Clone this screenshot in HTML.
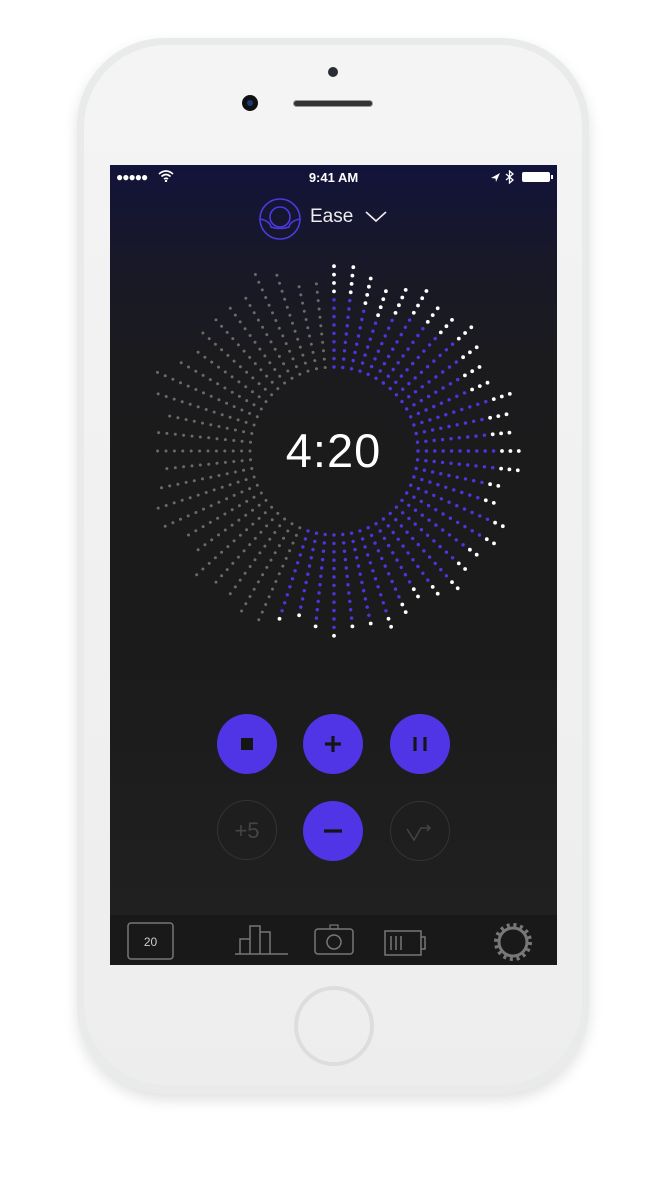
<!DOCTYPE html>
<html><head><meta charset="utf-8"><style>
html,body{margin:0;padding:0;background:#fff;width:666px;height:1200px;overflow:hidden;font-family:"Liberation Sans",sans-serif}
.phone{position:absolute;left:77px;top:38px;width:512px;height:1056px;border-radius:88px;background:#e9eaea;box-shadow:0 6px 14px rgba(0,0,0,.12)}
.face{position:absolute;left:7px;top:7px;width:498px;height:1040px;border-radius:82px;background:linear-gradient(#f4f4f4,#ededed)}
.screen{position:absolute;left:110px;top:165px;width:447px;height:800px;background:linear-gradient(#12133a 0px,#181829 90px,#1b1b1d 200px,#1b1b1b 500px,#202020 750px);overflow:hidden}
.tab{position:absolute;left:0;top:750px;width:447px;height:50px;background:#191919}
</style></head><body>
<div class="phone"><div class="face"></div></div>
<div style="position:absolute;left:328px;top:67px;width:10px;height:10px;border-radius:50%;background:#2a2d33"></div>
<div style="position:absolute;left:293px;top:100px;width:80px;height:7px;border-radius:4px;background:#333;border:1px solid #999;box-sizing:border-box"></div>
<div style="position:absolute;left:242px;top:95px;width:16px;height:16px;border-radius:50%;background:#111"><div style="margin:5px;width:6px;height:6px;border-radius:50%;background:#1c3a7a"></div></div>
<div style="position:absolute;left:294px;top:986px;width:72px;height:72px;border-radius:50%;border:4px solid #dddddd"></div>

<div class="screen">
 <div style="position:absolute;left:6px;top:5px;color:#fff;font-size:12px;letter-spacing:-1px">●●●●●</div>
 <svg style="position:absolute;left:48px;top:5px" width="16" height="12" viewBox="0 0 16 12"><path d="M1 4Q8-2 15 4M3.5 6.5Q8 2.5 12.5 6.5M6 9Q8 7.5 10 9" stroke="#fff" stroke-width="1.6" fill="none"/><circle cx="8" cy="11" r="1.2" fill="#fff"/></svg>
 <div style="position:absolute;left:0;width:447px;top:5px;text-align:center;color:#fff;font-size:13px;font-weight:bold">9:41 AM</div>
 <svg style="position:absolute;left:378px;top:5px" width="66" height="14"><path d="M3 8L12 3L8 12L7.5 8.5Z" fill="#fff"/><path d="M18 4L25 10L21.5 13V1L25 4L18 10" stroke="#fff" stroke-width="1.3" fill="none"/><rect x="34" y="2" width="28" height="10" rx="2" fill="#fff"/><rect x="63" y="5" width="2" height="4" fill="#fff"/></svg>
 <svg style="position:absolute;left:148px;top:32px" width="44" height="44" viewBox="0 0 44 44"><circle cx="22" cy="22" r="20" stroke="#4a3ae0" stroke-width="1.6" fill="none"/><circle cx="22" cy="20" r="10" stroke="#4a3ae0" stroke-width="1.6" fill="none"/><path d="M2 22Q12 24 13 30Q22 33 31 30Q32 24 42 22" stroke="#4a3ae0" stroke-width="1.6" fill="none"/></svg>
 <div style="position:absolute;left:200px;top:41px;color:#eee;font-size:19px">Ease</div>
 <svg style="position:absolute;left:255px;top:46px" width="22" height="12"><path d="M1 1L11 10L21 1" stroke="#eee" stroke-width="1.6" fill="none"/></svg>
 <svg id="dial" style="position:absolute;left:0;top:0" width="447" height="750"></svg>
 <div style="position:absolute;left:0;width:447px;top:258px;text-align:center;color:#fff;font-size:47px;font-weight:300;letter-spacing:1px">4:20</div>

 <svg style="position:absolute;left:0;top:540px" width="447" height="210">
  <circle cx="137" cy="39" r="30" fill="#4f35e6"/><rect x="131" y="33" width="12" height="12" fill="#151515"/>
  <circle cx="223" cy="39" r="30" fill="#4f35e6"/><path d="M223 31v16M215 39h16" stroke="#151515" stroke-width="3.2"/>
  <circle cx="310" cy="39" r="30" fill="#4f35e6"/><path d="M305 32v14M315 32v14" stroke="#151515" stroke-width="3.2"/>
  <circle cx="137" cy="125" r="29.5" fill="none" stroke="#333" stroke-width="1"/><text x="137" y="133" fill="#444" font-size="22" text-anchor="middle" font-family="Liberation Sans">+5</text>
  <circle cx="223" cy="126" r="30" fill="#4f35e6"/><path d="M214 126h18" stroke="#151515" stroke-width="3.2"/>
  <circle cx="310" cy="126" r="29.5" fill="none" stroke="#333" stroke-width="1"/><path d="M297 124L304 135L311 123H320M317 120L320 123L317 126" stroke="#444" stroke-width="1.5" fill="none"/>
 </svg>
 <div class="tab">
  <svg width="447" height="50">
   <rect x="18" y="8" width="45" height="36" rx="3" fill="none" stroke="#777" stroke-width="1.5"/><text x="40.5" y="31" fill="#ccc" font-size="12" text-anchor="middle" font-family="Liberation Sans">20</text>
   <path d="M125 39H178M130 39V24H140V39M140 39V11H150V39M150 39V17H160V39" stroke="#777" stroke-width="1.5" fill="none"/>
   <rect x="205" y="14" width="38" height="25" rx="3" fill="none" stroke="#777" stroke-width="1.5"/><rect x="220" y="10" width="8" height="4" fill="none" stroke="#777" stroke-width="1.2"/><circle cx="224" cy="27" r="7" fill="none" stroke="#777" stroke-width="1.5"/>
   <rect x="275" y="16" width="36" height="24" fill="none" stroke="#777" stroke-width="1.5"/><path d="M311 22h4v12h-4M281 21v14M286 21v14M291 21v14" stroke="#777" stroke-width="1.5" fill="none"/>
   <circle cx="403" cy="27" r="14" fill="none" stroke="#777" stroke-width="3"/><circle cx="403" cy="27" r="17" fill="none" stroke="#777" stroke-width="4" stroke-dasharray="3 3.7"/>
  </svg>
 </div>
</div>
<script>
var s=document.getElementById('dial'),cx=224,cy=286,h='';
for(var i=0;i<60;i++){var a=i*6;var rad=a*Math.PI/180;
 var outer=182+8*Math.sin(i*1.7)+5*Math.cos(i*0.9);
 var n=Math.floor((outer-84)/8.4)+1;
 var col=a<=198;var wc=Math.max(1,Math.round(4-3*a/198));
 for(var k=0;k<n;k++){var r=84+k*8.4;var x=cx+r*Math.sin(rad),y=cy-r*Math.cos(rad);
  var c,rr;if(col){if(k>=n-wc){c='#fff';rr=1.9}else{c='#4d35e0';rr=1.7}}else{c='#6a6a6a';rr=1.5}
  h+='<circle cx="'+x.toFixed(1)+'" cy="'+y.toFixed(1)+'" r="'+rr+'" fill="'+c+'"/>';}}
s.innerHTML=h;
</script>
</body></html>
